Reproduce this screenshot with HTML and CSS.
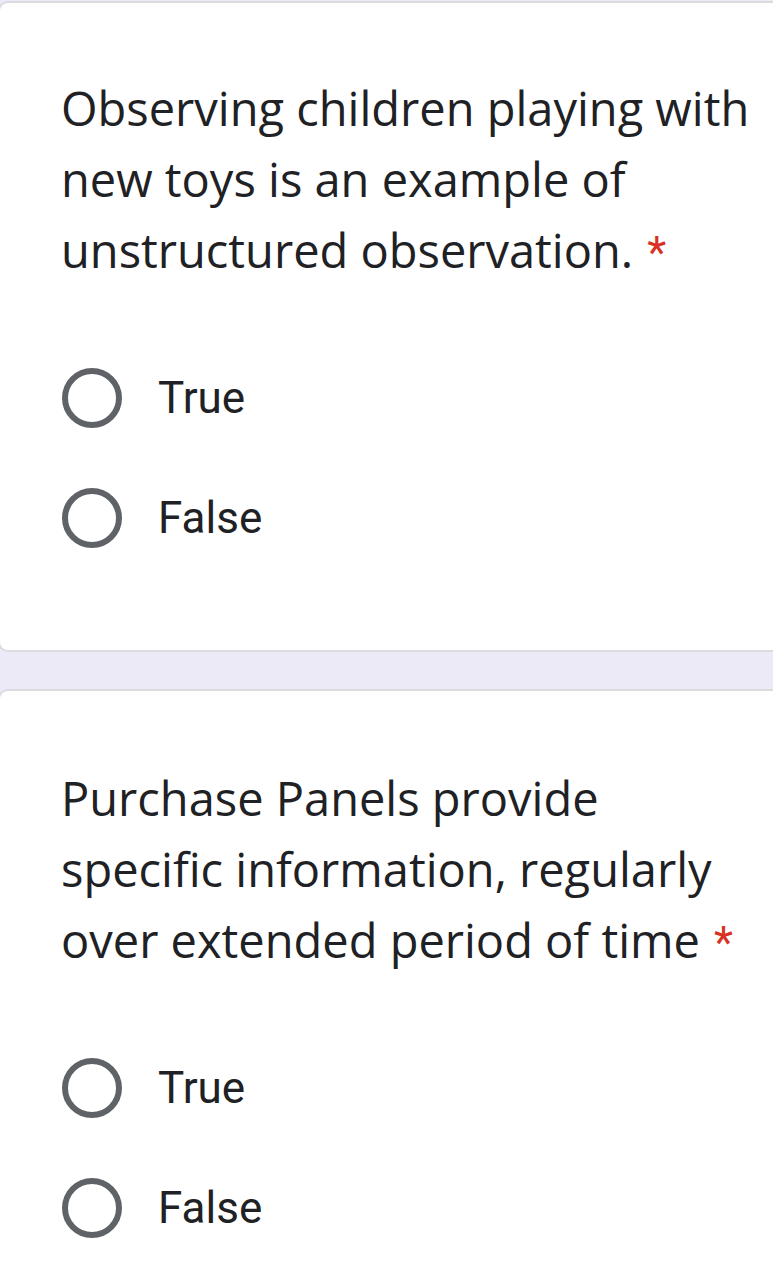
FILE: index.html
```html
<!DOCTYPE html>
<html>
<head>
<meta charset="utf-8">
<link rel="stylesheet" href="styles.css">
</head>
<body>
<div class="page">
  <section class="card card-first">
    <div class="question">Observing children playing with new toys is an example of unstructured observation.<span class="req">*</span></div>
    <div class="options">
      <div class="option"><span class="radio"></span><span class="label">True</span></div>
      <div class="option"><span class="radio"></span><span class="label">False</span></div>
    </div>
  </section>
  <section class="card card-second">
    <div class="question">Purchase Panels provide specific information, regularly over extended period of time<span class="req">*</span></div>
    <div class="options">
      <div class="option"><span class="radio"></span><span class="label">True</span></div>
      <div class="option"><span class="radio"></span><span class="label">False</span></div>
    </div>
  </section>
</div>
</body>
</html>
```
FILE: styles.css
```css
html, body {
  margin: 0;
  padding: 0;
}
body {
  background: #ffffff;
  font-family: Roboto, "Liberation Sans", sans-serif;
  color: #202124;
}
.page {
  background: #edeaf7;
  padding-top: 1px;
  display: flex;
  flex-direction: column;
  gap: 37px;
  overflow: hidden;
}
.card {
  background: #ffffff;
  border: 2px solid #dadce0;
  border-radius: 10px;
  margin-left: -2px;
  width: calc(100% + 40px);
  box-sizing: border-box;
  padding: 70px 0 72px 64px;
}
.card-second {
  padding-top: 72px;
}
.question {
  font-family: "Open Sans", "Noto Sans", sans-serif;
  font-size: 47px;
  line-height: 71px;
  width: 696px;
  margin-left: -3px;
  color: #202124;
}
.req {
  font-family: Roboto, sans-serif;
  font-size: 44px;
  color: #d93025;
  margin-left: 14px;
}
.options {
  margin-top: 49px;
  display: flex;
  flex-direction: column;
}
.option {
  height: 120px;
  display: flex;
  align-items: center;
  gap: 36px;
}
.radio {
  width: 60px;
  height: 60px;
  box-sizing: border-box;
  border: 6px solid #5f6368;
  border-radius: 50%;
  flex: none;
  margin-left: -2px;
}
.label {
  font-size: 44px;
  color: #202124;
}
```
